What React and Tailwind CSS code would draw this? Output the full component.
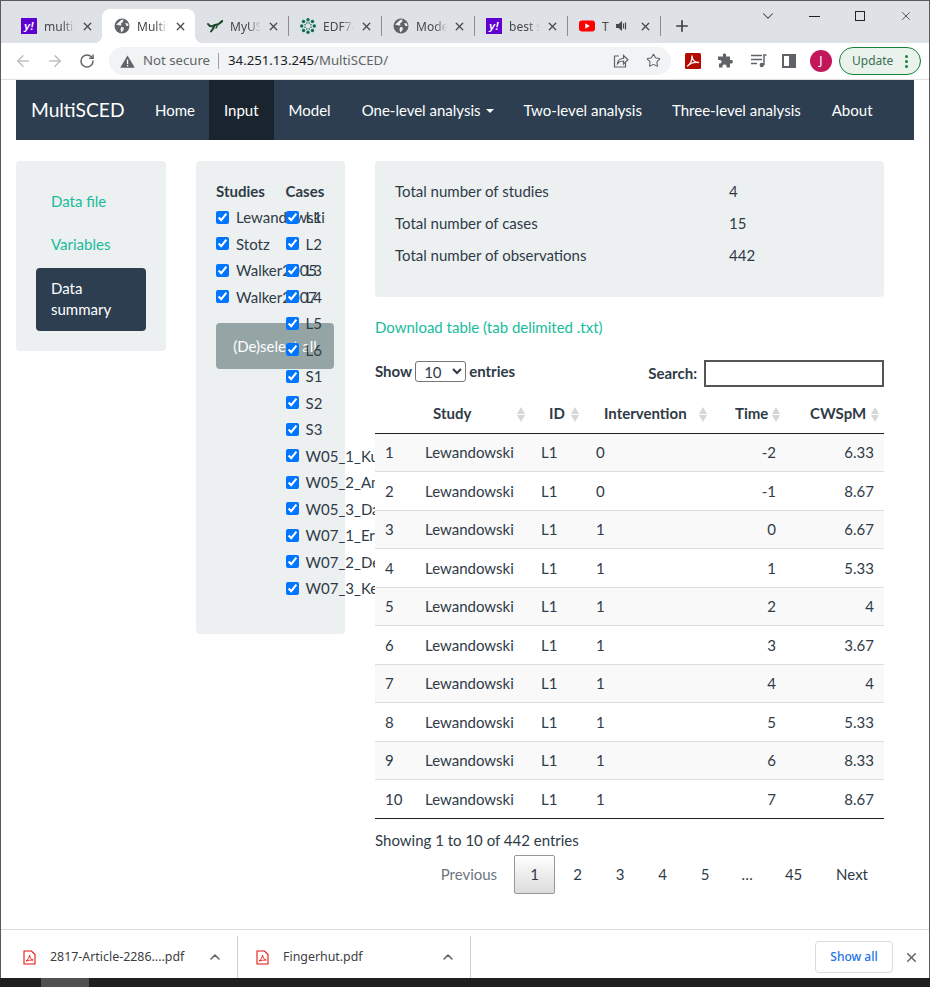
import { Star, ChevronUp, ChevronDown, X, Plus, ArrowLeft, ArrowRight, RotateCw } from 'lucide-react';

const rows = [
  [1, '0', '-2', '6.33'],
  [2, '0', '-1', '8.67'],
  [3, '1', '0', '6.67'],
  [4, '1', '1', '5.33'],
  [5, '1', '2', '4'],
  [6, '1', '3', '3.67'],
  [7, '1', '4', '4'],
  [8, '1', '5', '5.33'],
  [9, '1', '6', '8.33'],
  [10, '1', '7', '8.67'],
];

const studies = ['Lewandowski', 'Stotz', 'Walker2005', 'Walker2007'];
const cases = ['L1', 'L2', 'L3', 'L4', 'L5', 'L6', 'S1', 'S2', 'S3', 'W05_1_Kurt', 'W05_2_Amy', 'W05_3_Dan', 'W07_1_Eric', 'W07_2_Dean', 'W07_3_Kevin'];

function YahooIcon() {
  return (
    <span className="w-4 h-4 bg-[#5f01d1] flex items-center justify-center text-white text-[11px] font-bold italic leading-none font-['Liberation_Sans',sans-serif] shrink-0">
      y!
    </span>
  );
}

function GlobeIcon() {
  return (
    <svg width="16" height="16" viewBox="0 0 16 16" className="shrink-0">
      <circle cx="8" cy="8" r="7.5" fill="#5f6368" />
      <path d="M2 6.5 L5 4 L7 2 L9.5 1.5 L9 4 L7 5.5 L7.5 7.5 L5.5 7.5 Z M7 9 L10 9.5 L9.5 12 L7.5 14.5 L6.5 12 Z M11 5 L14 5.5 L14.5 8 L12.5 8 Z" fill="#eef0f2" />
    </svg>
  );
}

function BullIcon() {
  return (
    <svg width="16" height="16" viewBox="0 0 16 16" className="shrink-0" fill="none" stroke="#1d4a2b" strokeLinecap="round">
      <path d="M1 6 C2.5 8.5 5 8.5 7 7.5 C9.5 6.5 11 7 13 5 C14 4 14.5 3.5 15.5 3" strokeWidth="2" />
      <path d="M7.5 7.5 C7 9.5 6 11 4 13.5" strokeWidth="2" />
      <path d="M10 7 C10.5 8 10 9 9 10" strokeWidth="1.4" />
    </svg>
  );
}

function RingIcon() {
  const dots = [0, 45, 90, 135, 180, 225, 270, 315];
  return (
    <svg width="16" height="16" viewBox="0 0 16 16" className="shrink-0">
      {dots.map(a => (
        <circle key={a} cx={8 + 6.3 * Math.cos((a * Math.PI) / 180)} cy={8 + 6.3 * Math.sin((a * Math.PI) / 180)} r="1.7" fill="#0f6e54" />
      ))}
      {dots.map(a => (
        <circle key={a} cx={8 + 3.2 * Math.cos(((a + 22) * Math.PI) / 180)} cy={8 + 3.2 * Math.sin(((a + 22) * Math.PI) / 180)} r="0.8" fill="#0f6e54" />
      ))}
    </svg>
  );
}

function YoutubeIcon() {
  return (
    <svg width="16" height="12" viewBox="0 0 16 12" className="shrink-0">
      <rect width="16" height="11" y="0.5" rx="3" fill="#f00" />
      <path d="M6.3 3.2 L10.8 6 L6.3 8.8 Z" fill="#fff" />
    </svg>
  );
}

function Tab({ icon, label, active, sep, audio }) {
  return (
    <div className={`relative w-[93px] h-[34px] flex items-center pl-[12px] shrink-0 ${active ? 'bg-white rounded-t-[8px]' : ''}`}>
      {active && <span className="absolute left-[-8px] bottom-0 w-2 h-2 bg-[radial-gradient(circle_at_0_0,transparent_8px,white_8px)]" />}
      {active && <span className="absolute right-[-8px] bottom-0 w-2 h-2 bg-[radial-gradient(circle_at_100%_0,transparent_8px,white_8px)]" />}
      {icon}
      <span className={`ml-[7px] mt-[1px] overflow-hidden whitespace-nowrap text-[12px] text-[#45484c] ${audio ? 'w-[14px]' : 'w-[31px] [mask-image:linear-gradient(to_right,black_60%,transparent)]'}`}>
        {label}
      </span>
      {audio && (
        <svg width="11" height="12" viewBox="0 0 11 12" className="ml-0 shrink-0">
          <path d="M0 4 H2.5 L6 1 V11 L2.5 8 H0 Z" fill="#45484c" />
          <path d="M7.5 3.5 V8.5 M9.5 2.5 V9.5" stroke="#45484c" strokeWidth="1.2" />
        </svg>
      )}
      <X size={13} strokeWidth={2.4} color="#45484c" className={`absolute right-[8px] top-[11px]`} />
      {sep && <span className="absolute right-[-1px] top-[7px] w-px h-5 bg-[#8a8d91]" />}
    </div>
  );
}

function BrowserChrome() {
  return (
    <div className="shrink-0 font-['Noto_Sans',sans-serif]">
      <div className="h-[42px] bg-[#dee1e6] flex items-end pl-[8px] relative">
        <Tab icon={<YahooIcon />} label="multiSCED" />
        <Tab icon={<GlobeIcon />} label="MultiSCED" active />
        <Tab icon={<BullIcon />} label="MyUSF" sep />
        <Tab icon={<RingIcon />} label="EDF7405" sep />
        <Tab icon={<GlobeIcon />} label="Model" sep />
        <Tab icon={<YahooIcon />} label="best stat" sep />
        <Tab icon={<YoutubeIcon />} label="T" sep audio />
        <Plus size={18} strokeWidth={2.2} color="#3c4043" className="ml-[13px] mb-[8px]" />
        <div className="absolute right-[16px] top-[6px] flex items-center">
          <ChevronDown size={18} strokeWidth={1.4} color="#3c4043" className="mr-[32px]" />
          <span className="w-[11px] h-px bg-[#222] mr-[35px]" />
          <span className="w-[10px] h-[10px] border border-[#222] mr-[34px]" />
          <X size={14} strokeWidth={1.2} color="#222" />
        </div>
      </div>
      <div className="h-[37px] bg-white flex items-center border-b border-[#e0e0e0]">
        <ArrowLeft size={18} strokeWidth={2} color="#bcbfc3" className="ml-[13px]" />
        <ArrowRight size={18} strokeWidth={2} color="#bcbfc3" className="ml-[14px]" />
        <RotateCw size={16} strokeWidth={2.2} color="#5f6368" className="ml-[15px]" />
        <div className="ml-[14px] w-[562px] h-[28px] bg-[#f1f3f4] rounded-full flex items-center relative">
          <svg width="15" height="13" viewBox="0 0 15 13" className="ml-[11px]">
            <path d="M7.5 0.5 L14.8 12.8 H0.2 Z" fill="#5f6368" />
            <rect x="6.9" y="4.5" width="1.3" height="4.6" fill="#fff" />
            <rect x="6.9" y="10" width="1.3" height="1.4" fill="#fff" />
          </svg>
          <span className="ml-[8px] text-[13.2px] text-[#5f6368]">Not secure</span>
          <span className="ml-[8px] w-px h-4 bg-[#9aa0a6]" />
          <span className="ml-[9px] text-[13.2px] text-[#202124]">34.251.13.245<span className="text-[#5f6368]">/MultiSCED/</span></span>
          <svg width="16" height="16" viewBox="0 0 16 16" fill="none" stroke="#5f6368" strokeWidth="1.2" className="absolute right-[42px] top-[6px]">
            <path d="M6 3 H1.5 V14 H12.5 V10" />
            <path d="M4.5 10.5 C5 7 8 5.5 10.5 5.5 V2.5 L15 6.8 L10.5 11 V8 C8 8 6 8.7 4.5 10.5 Z" />
          </svg>
          <Star size={15} strokeWidth={1.7} color="#5f6368" className="absolute right-[10px] top-[6px]" />
        </div>
        <svg width="16" height="16" viewBox="0 0 16 16" className="ml-[14px]">
          <rect width="16" height="16" rx="1.5" fill="#b30b00" />
          <path d="M2.5 13 C5 11.5 7 7.5 7 3 C7.5 7.5 9.5 9.5 13.5 9.5 C9.5 9 5.5 10 2.5 13 Z" fill="none" stroke="#fff" strokeWidth="1.3" strokeLinejoin="round" />
        </svg>
        <svg width="16" height="16" viewBox="0 0 16 16" className="ml-[16px]">
          <path d="M6 1.5 C6 0.3 9 0.3 9 1.5 V3.5 H13 V7 H14.5 C16.3 7 16.3 10.5 14.5 10.5 H13 V14.5 H9.5 V13 C9.5 11 5.5 11 5.5 13 V14.5 H2 V10.5 H3 C5 10.5 5 7 3 7 H1 V3.5 H6 Z" fill="#5f6368" />
        </svg>
        <svg width="16" height="14" viewBox="0 0 16 14" fill="none" stroke="#5f6368" className="ml-[18px]">
          <path d="M0 1.5 H11 M0 5.5 H11 M0 9.5 H6" strokeWidth="1.4" />
          <path d="M13 11 V1 H15.5" strokeWidth="1.5" />
          <circle cx="10.8" cy="11" r="2.2" fill="#5f6368" stroke="none" />
        </svg>
        <span className="ml-[15px] w-[14px] h-[14px] border-2 border-[#5f6368] flex justify-end">
          <span className="w-[5px] h-full bg-[#5f6368]" />
        </span>
        <span className="ml-[14px] w-[22px] h-[22px] rounded-full bg-[#c2185b] text-white text-[12px] flex items-center justify-center">J</span>
        <div className="ml-[7px] w-[82px] h-[28px] rounded-full border border-[#188038] bg-[#e9f3ec] flex items-center pl-[12px] text-[12px] text-[#3c6e52] relative">
          Update
          <span className="absolute right-[12px] top-[7px] flex flex-col gap-[2px]">
            <span className="w-[3px] h-[3px] rounded-full bg-[#188038]" />
            <span className="w-[3px] h-[3px] rounded-full bg-[#188038]" />
            <span className="w-[3px] h-[3px] rounded-full bg-[#188038]" />
          </span>
        </div>
      </div>
    </div>
  );
}

function Navbar() {
  return (
    <nav className="h-[60px] bg-[#2c3e50] flex items-center text-white text-[15px] shrink-0">
      <span className="pl-[15px] w-[124px] text-[19.2px]">MultiSCED</span>
      <a className="pl-[15px] pr-[14px] h-full flex items-center">Home</a>
      <a className="px-[15px] h-full flex items-center bg-[#1a242f]">Input</a>
      <a className="pl-[15px] pr-[16px] h-full flex items-center">Model</a>
      <a className="px-[15px] h-full flex items-center">
        One-level analysis
        <span className="ml-[5px] mt-[2px] border-x-[4px] border-x-transparent border-t-[4px] border-t-white" />
      </a>
      <a className="px-[15px] h-full flex items-center">Two-level analysis</a>
      <a className="pl-[15px] pr-[16px] h-full flex items-center">Three-level analysis</a>
      <a className="px-[15px] h-full flex items-center">About</a>
    </nav>
  );
}

function Check({ label }) {
  return (
    <label className="h-[26.5px] flex items-center whitespace-nowrap">
      <input type="checkbox" defaultChecked className="w-[13px] h-[13px] m-0 accent-[#0075ff] shrink-0" />
      <span className="ml-[7px]">{label}</span>
    </label>
  );
}

function SortArrows({ className }) {
  return (
    <span className={`absolute top-[14px] flex flex-col gap-[1px] ${className}`}>
      <span className="border-x-[4px] border-x-transparent border-b-[7px] border-b-[#d6d6d6]" />
      <span className="border-x-[4px] border-x-transparent border-t-[7px] border-t-[#d6d6d6]" />
    </span>
  );
}

function SidePanels() {
  return (
    <>
      <div className="w-[150px] h-[190px] bg-[#ecf0f1] rounded-[4px] p-[20px] shrink-0">
        <div className="pl-[15px] h-[43px] flex items-center text-[#18bc9c] mt-[-1px]">Data file</div>
        <div className="pl-[15px] h-[43px] flex items-center text-[#18bc9c]">Variables</div>
        <div className="mt-[2px] bg-[#2c3e50] text-white rounded-[4px] pl-[15px] pb-[2px] h-[63px] flex items-center leading-[21px]">Data<br />summary</div>
      </div>
      <div className="ml-[30px] w-[149px] h-[473px] bg-[#ecf0f1] rounded-[4px] pl-[20px] pt-[20px] shrink-0 flex">
        <div className="w-[69.5px] shrink-0">
          <div className="font-bold h-[23px] leading-[21px]">Studies</div>
          {studies.map(s => <Check key={s} label={s} />)}
          <button className="mt-[13px] w-[118px] h-[46px] bg-[#95a5a6] rounded-[4px] text-white whitespace-nowrap">(De)select all</button>
        </div>
        <div className="relative z-10 w-[40px] shrink-0">
          <div className="font-bold h-[23px] leading-[21px]">Cases</div>
          {cases.map(c => <Check key={c} label={c} />)}
        </div>
      </div>
    </>
  );
}

function DataTable() {
  return (
    <>
      <div className="mt-[2px] flex items-end justify-between h-[47px]">
        <div className="flex items-center h-[22px] mb-[5px]">
          <span className="font-bold">Show</span>
          <select className="mx-[3px] w-[51px] h-[21px] border border-[#767676] rounded-[3px] bg-white text-[15px] pl-[4px]">
            <option>10</option>
          </select>
          <span className="font-bold">entries</span>
        </div>
        <div className="flex items-center">
          <span className="font-bold mr-[7px]">Search:</span>
          <input className="w-[180px] h-[27px] border-2 border-[#555] bg-white" />
        </div>
      </div>
      <table className="w-[509px] table-fixed border-collapse mt-[6px]">
        <colgroup>
          <col className="w-[40px]" />
          <col className="w-[116px]" />
          <col className="w-[59px]" />
          <col className="w-[122px]" />
          <col className="w-[74px]" />
          <col className="w-[98px]" />
        </colgroup>
        <thead>
          <tr className="h-[40px] border-b border-[#222]">
            <th />
            <th className="relative text-left font-bold pl-[18px]">Study<SortArrows className="left-[102px]" /></th>
            <th className="relative text-left font-bold pl-[18px]">ID<SortArrows className="left-[40px]" /></th>
            <th className="relative text-left font-bold pl-[14px]">Intervention<SortArrows className="left-[109px]" /></th>
            <th className="relative text-left font-bold pl-[23px]">Time<SortArrows className="left-[60px]" /></th>
            <th className="relative text-left font-bold pl-[24px]">CWSpM<SortArrows className="left-[85px]" /></th>
          </tr>
        </thead>
        <tbody>
          {rows.map(r => (
            <tr key={r[0]} className={`h-[38.5px] border-b ${r[0] === 10 ? 'border-[#222]' : 'border-[#ddd]'} ${r[0] % 2 ? 'bg-[#f9f9f9]' : 'bg-white'}`}>
              <td className="pl-[10px]">{r[0]}</td>
              <td className="pl-[10px]">Lewandowski</td>
              <td className="pl-[10px]">L1</td>
              <td className="pl-[6px]">{r[1]}</td>
              <td className="pr-[10px] text-right">{r[2]}</td>
              <td className="pr-[10px] text-right">{r[3]}</td>
            </tr>
          ))}
        </tbody>
      </table>
      <div className="mt-[10px] h-[22px] leading-[22px]">Showing 1 to 10 of 442 entries</div>
      <div className="mt-[4px] flex items-center justify-end pr-[16px] h-[39px]">
        <span className="text-[#6b7680] pr-[17px]">Previous</span>
        <span className="w-[41px] h-[39px] border border-[#979797] rounded-[2px] bg-gradient-to-b from-white to-[#dcdcdc] flex items-center justify-center">1</span>
        <span className="w-[43px] text-center ml-[1px]">2</span>
        <span className="w-[42px] text-center">3</span>
        <span className="w-[43px] text-center">4</span>
        <span className="w-[42px] text-center">5</span>
        <span className="w-[42px] text-center">…</span>
        <span className="w-[51px] text-center">45</span>
        <span className="ml-[17px]">Next</span>
      </div>
    </>
  );
}

function DownloadBar() {
  const PdfIcon = () => (
    <svg width="13" height="15" viewBox="0 0 13 15" fill="none" stroke="#e8150e" strokeWidth="1.1" className="shrink-0">
      <path d="M1 1 H8.5 L12 4.5 V14 H1 Z" />
      <path d="M3 11 C5 10 6.3 7.5 6.5 5 C7 8 8 9.5 10.2 10 C8 10 5 10.3 3 11 Z" strokeWidth="0.9" />
    </svg>
  );
  return (
    <div className="h-[49px] bg-white border-t border-[#d9dadc] flex shrink-0 relative font-['Noto_Sans',sans-serif] text-[12.4px] text-[#3c4043]">
      <div className="w-[237px] flex items-center pl-[22px] border-r border-[#d0d1d3] mt-[6px]">
        <PdfIcon />
        <span className="ml-[14px] w-[136px] whitespace-nowrap">2817-Article-2286....pdf</span>
        <ChevronUp size={16} strokeWidth={2.4} color="#5f6368" className="ml-[21px]" />
      </div>
      <div className="w-[233px] flex items-center pl-[18px] border-r border-[#d0d1d3] mt-[6px]">
        <PdfIcon />
        <span className="ml-[14px] w-[156px] whitespace-nowrap">Fingerhut.pdf</span>
        <ChevronUp size={16} strokeWidth={2.4} color="#5f6368" className="ml-[1px]" />
      </div>
      <div className="ml-auto flex items-center pt-[6px]">
        <span className="w-[78px] h-[32px] rounded-[4px] border border-[#dadce0] text-[#1a73e8] text-[12px] font-medium flex items-center justify-center">Show all</span>
        <X size={15} strokeWidth={2.4} color="#5f6368" className="ml-[11px] mr-[10px]" />
      </div>
    </div>
  );
}

export default function App() {
  return (
    <div className="w-[930px] h-[987px] overflow-hidden flex flex-col bg-white relative">
      <div className="flex-1 min-h-0 flex flex-col border-l border-r border-t border-[#5a5a5a]">
        <BrowserChrome />
        <div className="flex-1 min-h-0 px-[15px] overflow-hidden font-['Lato',sans-serif] text-[15px] text-[#2f3b47] flex flex-col">
          <Navbar />
          <div className="flex mt-[21px] items-start">
            <SidePanels />
            <div className="relative z-20 ml-[30px] w-[509px] bg-white shrink-0 self-stretch pb-[40px]">
              <div className="h-[136px] bg-[#ecf0f1] rounded-[4px] pt-[14px] pl-[20px]">
                {[['Total number of studies', '4'], ['Total number of cases', '15'], ['Total number of observations', '442']].map(([a, b]) => (
                  <div key={a} className="h-[32px] flex items-center">
                    <span className="w-[334px]">{a}</span>
                    <span>{b}</span>
                  </div>
                ))}
              </div>
              <a className="block mt-[20px] h-[21px] leading-[21px] text-[#18bc9c]">Download table (tab delimited .txt)</a>
              <DataTable />
            </div>
          </div>
        </div>
        <DownloadBar />
      </div>
      <div className="h-[9px] bg-[#1f1f1f] shrink-0 flex">
        <span className="ml-[41px] w-[48px] bg-[#505050]" />
      </div>
    </div>
  );
}
